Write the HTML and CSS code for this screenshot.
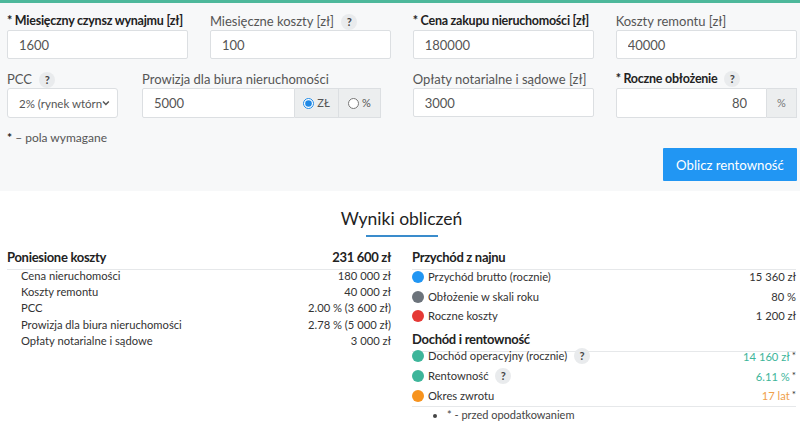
FILE: index.html
```html
<!DOCTYPE html>
<html lang="pl">
<head>
    <meta charset="UTF-8">
    <meta name="viewport" content="width=device-width, initial-scale=1.0">
    <title>Kalkulator rentowności najmu</title>
    <link rel="stylesheet" href="styles.css">
</head>
<body>
    <div class="top-bar"></div>

    <form class="calc" onsubmit="return false">
        <div class="row">
            <div class="field">
                <label class="req">* Miesięczny czynsz wynajmu [zł]</label>
                <input class="input" type="text" value="1600">
            </div>
            <div class="field">
                <label>Miesięczne koszty [zł] <span class="hint">?</span></label>
                <input class="input" type="text" value="100">
            </div>
            <div class="field">
                <label class="req">* Cena zakupu nieruchomości [zł]</label>
                <input class="input" type="text" value="180000">
            </div>
            <div class="field">
                <label>Koszty remontu [zł]</label>
                <input class="input" type="text" value="40000">
            </div>
        </div>

        <div class="row">
            <div class="pair">
                <div class="field">
                    <label>PCC <span class="hint">?</span></label>
                    <div class="select">
                        <span>2% (rynek wtórn</span>
                        <svg width="8" height="6" viewBox="0 0 8 6"><path d="M1 1.5l3 3 3-3" fill="none" stroke="#555" stroke-width="1.6"/></svg>
                    </div>
                </div>
                <div class="field">
                    <label>Prowizja dla biura nieruchomości</label>
                    <div class="group">
                        <input class="input" type="text" value="5000">
                        <label class="addon zl"><input type="radio" name="unit" checked> ZŁ</label>
                        <label class="addon pr"><input type="radio" name="unit"> %</label>
                    </div>
                </div>
            </div>
            <div class="field">
                <label>Opłaty notarialne i sądowe [zł]</label>
                <input class="input" type="text" value="3000">
            </div>
            <div class="field">
                <label class="req">* Roczne obłożenie <span class="hint">?</span></label>
                <div class="group">
                    <input class="input right" type="text" value="80">
                    <span class="addon pct">%</span>
                </div>
            </div>
        </div>

        <p class="note"><b>*</b> – pola wymagane</p>
        <div class="actions">
            <button class="btn" type="submit">Oblicz rentowność</button>
        </div>
    </form>

    <section class="results">
        <h2 class="title">Wyniki obliczeń</h2>

        <div class="res-cols">
            <div class="res-block">
                <div class="res-head"><span>Poniesione koszty</span><span>231 600 zł</span></div>
                <ul class="res-list sub">
                    <li><span>Cena nieruchomości</span><span>180 000 zł</span></li>
                    <li><span>Koszty remontu</span><span>40 000 zł</span></li>
                    <li><span>PCC</span><span>2.00 % (3 600 zł)</span></li>
                    <li><span>Prowizja dla biura nieruchomości</span><span>2.78 % (5 000 zł)</span></li>
                    <li><span>Opłaty notarialne i sądowe</span><span>3 000 zł</span></li>
                </ul>
            </div>

            <div class="res-block">
                <div class="res-head"><span>Przychód z najnu</span></div>
                <ul class="res-list dots">
                    <li><span><i class="dot blue"></i>Przychód brutto (rocznie)</span><span>15 360 zł</span></li>
                    <li><span><i class="dot gray"></i>Obłożenie w skali roku</span><span>80 %</span></li>
                    <li><span><i class="dot red"></i>Roczne koszty</span><span>1 200 zł</span></li>
                </ul>

                <div class="res-head second"><span>Dochód i rentowność</span></div>
                <ul class="res-list dots last">
                    <li><span><i class="dot teal"></i>Dochód operacyjny (rocznie) <span class="hint">?</span></span><span class="val teal-t">14 160 zł<sup>*</sup></span></li>
                    <li><span><i class="dot teal"></i>Rentowność <span class="hint">?</span></span><span class="val teal-t">6.11 %<sup>*</sup></span></li>
                    <li><span><i class="dot orange"></i>Okres zwrotu</span><span class="val orange-t">17 lat<sup>*</sup></span></li>
                </ul>
                <ul class="foot">
                    <li>* - przed opodatkowaniem</li>
                </ul>
            </div>
        </div>
    </section>
</body>
</html>
```

FILE: styles.css
```css
body {
    margin: 0;
    background-color: white;
    font-family: Lato, "Noto Sans", sans-serif;
    font-size: 13px;
    color: #555;
}

.top-bar {
    height: 3px;
    background-color: #4db89b;
}

.calc {
    background-color: #f7f8f9;
    padding: 9px 3px 10px 7px;
}

.row {
    display: grid;
    grid-template-columns: repeat(4, minmax(0, 1fr));
    column-gap: 21.5px;
    margin-bottom: 11px;
}

.pair {
    grid-column: span 2;
    display: grid;
    grid-template-columns: 111px 239px;
    column-gap: 24px;
}

.field label {
    display: block;
    height: 18px;
    line-height: 18px;
    white-space: nowrap;
}

.field label.req {
    color: #222;
    font-weight: 700;
    font-size: 12.5px;
    letter-spacing: -0.25px;
}

.hint {
    display: inline-block;
    width: 16px;
    height: 16px;
    line-height: 16px;
    margin-left: 4px;
    border-radius: 50%;
    background-color: #e9ebed;
    color: #444;
    font-size: 11px;
    font-weight: 700;
    letter-spacing: 0;
    text-align: center;
    vertical-align: 0;
}

.input {
    box-sizing: border-box;
    width: 100%;
    height: 29px;
    padding: 0 11px;
    border: 1px solid #dcdfe2;
    border-radius: 2px;
    background-color: white;
    font-family: inherit;
    font-size: 13px;
    color: #555;
}

.input.right {
    text-align: right;
    padding-right: 19px;
}

.select {
    box-sizing: border-box;
    height: 30px;
    padding: 0 7px 0 11px;
    display: flex;
    align-items: center;
    justify-content: space-between;
    border: 1px solid #dcdfe2;
    border-radius: 3px;
    background-color: white;
    font-size: 11.5px;
    white-space: nowrap;
}

.group {
    display: flex;
    height: 30px;
}

.group .input {
    flex: 1;
    min-width: 0;
    height: 30px;
    border-radius: 2px 0 0 2px;
}

.field .addon {
    display: flex;
    align-items: center;
    justify-content: center;
    flex: none;
    height: 30px;
    box-sizing: border-box;
    padding: 0;
    border: 1px solid #dcdfe2;
    border-left: none;
    background-color: #eceeef;
    font-size: 11px;
    line-height: 30px;
}

.addon.zl {
    width: 44px;
}

.addon.pr {
    width: 42px;
}

.addon input {
    margin: 0 3px 0 0;
    width: 11px;
    height: 11px;
    accent-color: #1e88e5;
}

.addon.pct {
    width: 30px;
    color: #777;
}

.note {
    margin: 10px 0 0;
    line-height: 18px;
    font-size: 12px;
}

.note b {
    color: #222;
}

.actions {
    display: flex;
    justify-content: flex-end;
    margin-top: 1px;
}

.btn {
    width: 134px;
    height: 33px;
    border: none;
    border-radius: 1px;
    background-color: #2196f3;
    color: white;
    font-family: inherit;
    font-size: 13.2px;
    cursor: pointer;
}

.results {
    padding: 0 4px 0 7px;
}

.title {
    margin: 17px auto 0;
    width: 72px;
    padding-bottom: 6px;
    border-bottom: 2px solid #3a8ccc;
    font-size: 17.5px;
    font-weight: 400;
    color: #222;
    white-space: nowrap;
    display: flex;
    justify-content: center;
}

.res-cols {
    display: grid;
    grid-template-columns: minmax(0, 1fr) minmax(0, 1fr);
    column-gap: 21px;
    margin-top: 9px;
}

.res-head {
    display: flex;
    justify-content: space-between;
    height: 23px;
    line-height: 22px;
    border-bottom: 1px solid #e6e8ea;
    font-size: 13px;
    font-weight: 700;
    letter-spacing: -0.3px;
    color: #222;
}

.res-head.second {
    margin-top: 2px;
}

.res-list {
    list-style: none;
    margin: -3px 0 0;
    padding: 0;
    color: #333;
    font-size: 11.2px;
}

.res-list li {
    display: flex;
    justify-content: space-between;
    align-items: center;
}

.res-list.sub {
    padding-left: 14px;
}

.res-list.sub li {
    height: 16.3px;
}

.res-list.dots li {
    height: 19.5px;
}

.res-list.last {
    margin-top: -5px;
    border-bottom: 1px solid #e6e8ea;
    padding-bottom: 1px;
}

.dot {
    display: inline-block;
    width: 12px;
    height: 12px;
    margin-right: 4px;
    border-radius: 50%;
    vertical-align: -2px;
}

.blue { background-color: #2196f3; }
.gray { background-color: #6c737b; }
.red { background-color: #e53935; }
.teal { background-color: #3db59a; }
.orange { background-color: #f7931e; }

.teal-t { color: #3db59a; }
.orange-t { color: #f0a04b; }

.val sup {
    color: #333;
    font-size: 10px;
    margin-left: 2px;
    vertical-align: 2px;
}

.foot {
    margin: 1px 0 0;
    padding-left: 35px;
    font-size: 11px;
    line-height: 14px;
    color: #444;
}
```
